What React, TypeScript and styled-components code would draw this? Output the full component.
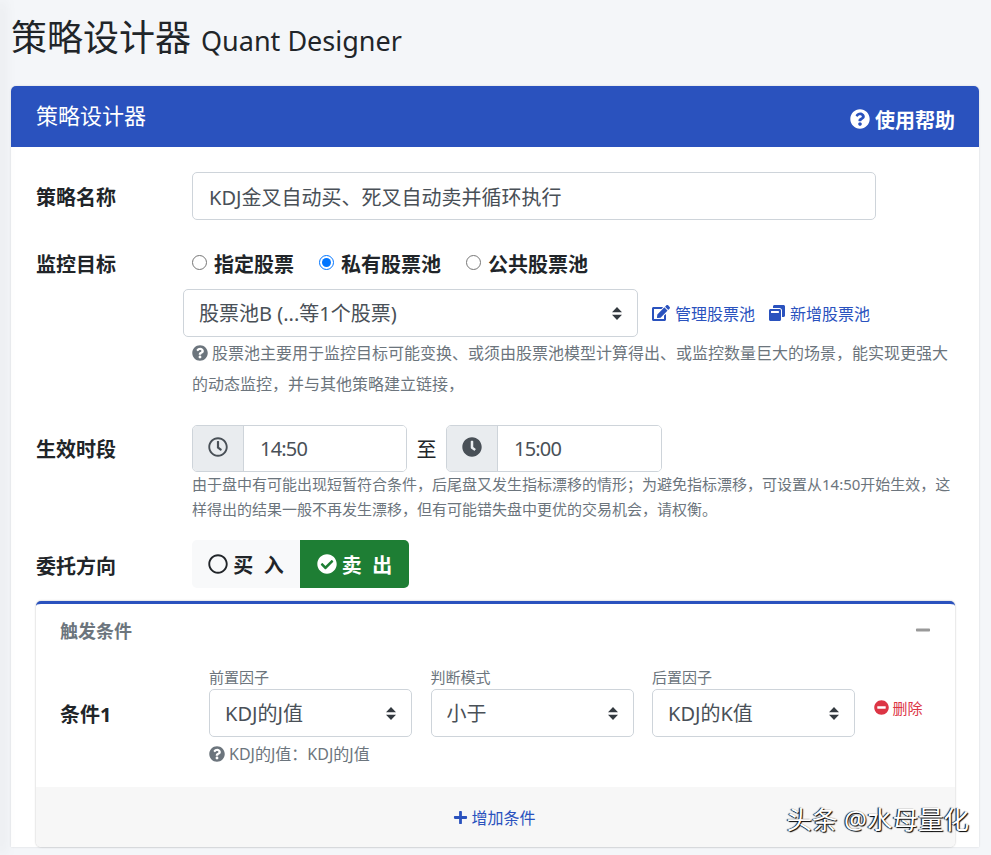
import React from "react";
import styled, { createGlobalStyle } from "styled-components";
import {
	FaCheckCircle,
	FaClock,
	FaEdit,
	FaMinus,
	FaMinusCircle,
	FaPlus,
	FaQuestionCircle,
	FaRegCircle,
	FaRegClock,
	FaWindowRestore,
} from "react-icons/fa";

const blue = "#2a52be";
const arrow = `url("data:image/svg+xml,%3csvg xmlns='http://www.w3.org/2000/svg' width='4' height='5' viewBox='0 0 4 5'%3e%3cpath fill='%23343a40' d='M2 0L0 2h4zm0 5L0 3h4z'/%3e%3c/svg%3e")`;

const GlobalStyle = createGlobalStyle`
	html, body {
		margin: 0;
		padding: 0;
		height: 855px;
		overflow: hidden;
	}
	body {
		font-family: "Noto Sans", "Noto Sans CJK SC", sans-serif;
		font-size: 20px;
		color: #212529;
		background: #f4f6f9;
	}
	* {
		box-sizing: border-box;
	}
`;

const Page = styled.div`
	position: relative;
	height: 855px;
	overflow: hidden;
	padding: 0 12px 0 11px;
	background: #f4f6f9;
`;

// shadow of the sidebar that sits just off the left edge
const EdgeShadow = styled.div`
	position: absolute;
	left: -2px;
	top: 0;
	width: 2px;
	height: 100%;
	box-shadow: 2px 0 14px rgba(0, 0, 0, 0.22);
	pointer-events: none;
`;

const PageTitle = styled.h1`
	display: flex;
	align-items: baseline;
	gap: 10px;
	height: 86px;
	margin: 0;
	padding-top: 11px;
	font-size: 36px;
	line-height: 54px;
	font-weight: 400;
	color: #212529;

	small {
		font-size: 27px;
	}
`;

const Card = styled.section`
	background: #fff;
	border-radius: 5px 5px 0 0;
	box-shadow: 0 0 2px rgba(0, 0, 0, 0.15);
`;

const CardHeader = styled.header`
	display: flex;
	justify-content: space-between;
	height: 61px;
	padding: 0 24px 0 25px;
	background: ${blue};
	border-radius: 5px 5px 0 0;
	color: #fff;
`;

const CardTitle = styled.div`
	font-size: 22px;
	line-height: 59px;
`;

const HelpLink = styled.a`
	display: flex;
	align-items: center;
	gap: 5px;
	padding-top: 5px;
	font-size: 20px;
	font-weight: 700;
	color: #fff;
`;

const CardBody = styled.div`
	padding: 25px 24px 0 25px;
`;

const FormRow = styled.div<{ $top?: number }>`
	display: grid;
	grid-template-columns: 156px 1fr;
	margin-top: ${({ $top }) => $top ?? 0}px;
`;

const RowLabel = styled.label<{ $height: number }>`
	font-weight: 700;
	font-size: 20px;
	line-height: ${({ $height }) => $height}px;
`;

const TextInput = styled.input`
	display: block;
	width: 684px;
	height: 48px;
	padding: 0 16px;
	border: 1px solid #ced4da;
	border-radius: 5px;
	font: inherit;
	color: #495057;
	background: #fff;
	outline: none;
`;

const RadioRow = styled.div`
	display: flex;
	align-items: center;
	gap: 25px;
	height: 30px;
`;

const RadioLabel = styled.label`
	display: flex;
	align-items: center;
	gap: 7px;
	font-weight: 700;
	font-size: 20px;

	input {
		width: 15px;
		height: 15px;
		margin: 0 0 2px;
	}
`;

const PoolRow = styled.div`
	display: flex;
	align-items: center;
	margin: 11px 0 0 -9px;
`;

const Select = styled.select<{ $width: number }>`
	appearance: none;
	display: block;
	width: ${({ $width }) => $width}px;
	height: 48px;
	padding: 0 30px 0 15px;
	border: 1px solid #ced4da;
	border-radius: 5px;
	font: inherit;
	color: #495057;
	background: #fff ${arrow} no-repeat right 15px center / 10px 12.5px;
	outline: none;
`;

const ToolLink = styled.a`
	display: flex;
	align-items: center;
	gap: 5px;
	margin-left: 14px;
	font-size: 16px;
	color: ${blue};
`;

const Hint = styled.div<{ $size: number; $line: number }>`
	font-size: ${({ $size }) => $size}px;
	line-height: ${({ $line }) => $line}px;
	color: #6c757d;

	svg {
		vertical-align: -2px;
		margin-right: 4px;
	}
`;

const PoolHint = styled(Hint)`
	margin-top: 1px;
	white-space: nowrap;
`;

const TimeRow = styled.div`
	display: flex;
	align-items: center;
`;

const TimeGroup = styled.div<{ $width: number }>`
	display: flex;
	width: ${({ $width }) => $width}px;
	height: 47px;
	border: 1px solid #ced4da;
	border-radius: 5px;
	overflow: hidden;
`;

const TimeAddon = styled.div`
	display: flex;
	align-items: center;
	justify-content: center;
	width: 51px;
	padding-bottom: 3px;
	background: #e9ecef;
	border-right: 1px solid #ced4da;
	color: #495057;
`;

const TimeInput = styled.input`
	flex: 1;
	min-width: 0;
	padding: 0 16px;
	border: 0;
	font: inherit;
	letter-spacing: -0.8px;
	color: #495057;
	outline: none;
`;

const TimeSeparator = styled.span`
	width: 39px;
	text-align: center;
	font-size: 20px;
`;

const Toggle = styled.div`
	display: flex;
	height: 48px;
`;

const ToggleButton = styled.button<{ $active?: boolean }>`
	display: flex;
	align-items: center;
	justify-content: center;
	gap: 5px;
	width: ${({ $active }) => ($active ? 109 : 108)}px;
	padding: 0;
	border: 0;
	border-radius: ${({ $active }) => ($active ? "0 5px 5px 0" : "5px 0 0 5px")};
	background: ${({ $active }) => ($active ? "#1e7e34" : "#f8f9fa")};
	color: ${({ $active }) => ($active ? "#fff" : "#212529")};
	font: inherit;
	font-weight: 700;
`;

const InnerCard = styled.section`
	margin-top: 7px;
	height: 246px;
	border-top: 3px solid ${blue};
	border-radius: 5px;
	background: #fff;
	box-shadow: 0 0 2px rgba(0, 0, 0, 0.3);
	display: flex;
	flex-direction: column;
	overflow: hidden;
`;

const InnerHeader = styled.div`
	display: flex;
	align-items: center;
	justify-content: space-between;
	height: 52px;
	padding: 0 24px;
	font-size: 18px;
	font-weight: 700;
	color: #6c757d;

	svg {
		color: #999;
	}
`;

const ConditionRow = styled.div`
	flex: 1;
	display: grid;
	grid-template-columns: 130.5px repeat(3, 203px) auto;
	column-gap: 18.5px;
	align-items: start;
	padding: 11px 0 0 24px;
`;

const ConditionName = styled.div`
	padding-top: 24px;
	font-size: 20px;
	font-weight: 700;
	line-height: 48px;
`;

const FactorLabel = styled.div`
	height: 22px;
	font-size: 15px;
	line-height: 20px;
	color: #6c757d;
`;

const FactorHint = styled(Hint)`
	margin-top: 6px;
	white-space: nowrap;
`;

const DeleteLink = styled.a`
	display: flex;
	align-items: center;
	gap: 4px;
	margin-top: 30px;
	font-size: 15px;
	color: #dc3545;
`;

const InnerFooter = styled.div`
	display: flex;
	align-items: center;
	justify-content: center;
	gap: 3px;
	height: 60px;
	padding-right: 2px;
	background: #f7f7f7;
	font-size: 16px;
	color: ${blue};
`;

const Watermark = styled.div`
	position: absolute;
	right: 22px;
	top: 803px;
	font-size: 25.5px;
	line-height: 32px;
	color: #fff;
	text-shadow: 1px 1px 1px #000, -1px 0 1px #000;
`;

const App = () => {
	return (
		<Page>
			<GlobalStyle />
			<PageTitle>
				策略设计器 <small>Quant Designer</small>
			</PageTitle>
			<Card>
				<CardHeader>
					<CardTitle>策略设计器</CardTitle>
					<HelpLink>
						<FaQuestionCircle size={20} />
						使用帮助
					</HelpLink>
				</CardHeader>
				<CardBody>
					<FormRow>
						<RowLabel $height={51}>策略名称</RowLabel>
						<TextInput readOnly value="KDJ金叉自动买、死叉自动卖并循环执行" />
					</FormRow>

					<FormRow $top={25}>
						<RowLabel $height={34}>监控目标</RowLabel>
						<div>
							<RadioRow>
								<RadioLabel>
									<input type="radio" name="target" readOnly />
									指定股票
								</RadioLabel>
								<RadioLabel>
									<input type="radio" name="target" defaultChecked />
									私有股票池
								</RadioLabel>
								<RadioLabel>
									<input type="radio" name="target" readOnly />
									公共股票池
								</RadioLabel>
							</RadioRow>
							<PoolRow>
								<Select $width={455}>
									<option>股票池B (...等1个股票)</option>
								</Select>
								<ToolLink>
									<FaEdit size={18} />
									管理股票池
								</ToolLink>
								<ToolLink>
									<FaWindowRestore size={16} />
									新增股票池
								</ToolLink>
							</PoolRow>
							<PoolHint $size={16} $line={31}>
								<FaQuestionCircle size={16} />
								股票池主要用于监控目标可能变换、或须由股票池模型计算得出、或监控数量巨大的场景，能实现更强大
								<br />
								的动态监控，并与其他策略建立链接，
							</PoolHint>
						</div>
					</FormRow>

					<FormRow $top={25}>
						<RowLabel $height={49}>生效时段</RowLabel>
						<div>
							<TimeRow>
								<TimeGroup $width={215}>
									<TimeAddon>
										<FaRegClock size={20} />
									</TimeAddon>
									<TimeInput readOnly value="14:50" />
								</TimeGroup>
								<TimeSeparator>至</TimeSeparator>
								<TimeGroup $width={216}>
									<TimeAddon>
										<FaClock size={20} />
									</TimeAddon>
									<TimeInput readOnly value="15:00" />
								</TimeGroup>
							</TimeRow>
							<Hint $size={15} $line={25}>
								由于盘中有可能出现短暂符合条件，后尾盘又发生指标漂移的情形；为避免指标漂移，可设置从14:50开始生效，这
								<br />
								样得出的结果一般不再发生漂移，但有可能错失盘中更优的交易机会，请权衡。
							</Hint>
						</div>
					</FormRow>

					<FormRow $top={18}>
						<RowLabel $height={54}>委托方向</RowLabel>
						<Toggle>
							<ToggleButton>
								<FaRegCircle size={20} />
								买&nbsp;&nbsp;入
							</ToggleButton>
							<ToggleButton $active>
								<FaCheckCircle size={20} />
								卖&nbsp;&nbsp;出
							</ToggleButton>
						</Toggle>
					</FormRow>

					<InnerCard>
						<InnerHeader>
							触发条件
							<FaMinus size={16} />
						</InnerHeader>
						<ConditionRow>
							<ConditionName>条件1</ConditionName>
							<div>
								<FactorLabel>前置因子</FactorLabel>
								<Select $width={203}>
									<option>KDJ的J值</option>
								</Select>
								<FactorHint $size={16} $line={22}>
									<FaQuestionCircle size={16} />
									KDJ的J值：KDJ的J值
								</FactorHint>
							</div>
							<div>
								<FactorLabel>判断模式</FactorLabel>
								<Select $width={203}>
									<option>小于</option>
								</Select>
							</div>
							<div>
								<FactorLabel>后置因子</FactorLabel>
								<Select $width={203}>
									<option>KDJ的K值</option>
								</Select>
							</div>
							<DeleteLink>
								<FaMinusCircle size={15} />
								删除
							</DeleteLink>
						</ConditionRow>
						<InnerFooter>
							<FaPlus size={15} />
							增加条件
						</InnerFooter>
					</InnerCard>
				</CardBody>
			</Card>
			<EdgeShadow />
			<Watermark>头条 @水母量化</Watermark>
		</Page>
	);
};

export default App;
